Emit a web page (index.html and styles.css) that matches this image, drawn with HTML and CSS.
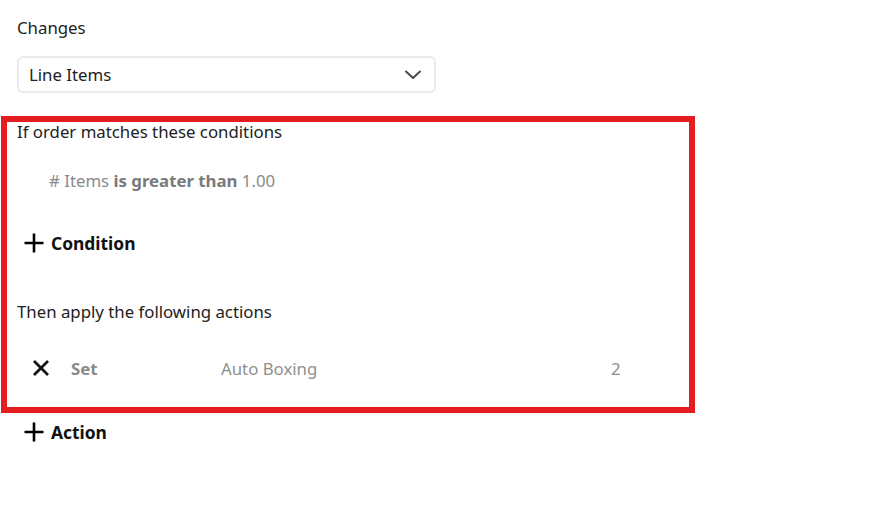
FILE: index.html
```html
<!DOCTYPE html>
<html lang="en">
<head>
    <meta charset="UTF-8">
    <title>Rule</title>
    <link rel="stylesheet" href="styles.css">
</head>
<body>
<div class="panel">
    <div class="field-label">Changes</div>
    <div class="select">
        <span>Line Items</span>
        <svg class="chevron" width="18" height="10" viewBox="0 0 18 10">
            <path d="M2 1.5 L9 8 L16 1.5" fill="none" stroke="#4a4a4a" stroke-width="2" stroke-linecap="round" stroke-linejoin="round"/>
        </svg>
    </div>

    <div class="rule">
        <div class="rule-title">If order matches these conditions</div>
        <div class="condition">
            # Items <b>is greater than</b> 1.00
        </div>
        <div class="add-btn add-condition">
            <svg width="20" height="20" viewBox="0 0 20 20">
                <path d="M10 0.5 V19.5 M0.5 10 H19.5" stroke="#000" stroke-width="2.6"/>
            </svg>
            <span>Condition</span>
        </div>

        <div class="rule-title then">Then apply the following actions</div>
        <div class="action-row">
            <svg class="remove" width="18" height="18" viewBox="0 0 18 18">
                <path d="M2 2 L16 16 M16 2 L2 16" stroke="#111" stroke-width="2.8"/>
            </svg>
            <span class="verb">Set</span>
            <span class="target">Auto Boxing</span>
            <span class="value">2</span>
        </div>
    </div>

    <div class="add-btn add-action">
        <svg width="20" height="20" viewBox="0 0 20 20">
            <path d="M10 0.5 V19.5 M0.5 10 H19.5" stroke="#000" stroke-width="2.6"/>
        </svg>
        <span>Action</span>
    </div>
</div>
</body>
</html>
```

FILE: styles.css
```css
*{
    margin: 0;
    padding: 0;
    box-sizing: border-box;
}
body{
    background: #fff;
    font-family: "Noto Sans", "Open Sans", sans-serif;
    font-size: 16.8px;
    color: #222;
}
.panel{
    padding: 17px 0 0 17px;
}
.field-label{
    line-height: 22px;
}
.select{
    display: flex;
    align-items: center;
    justify-content: space-between;
    width: 419px;
    height: 37px;
    margin-top: 17px;
    padding: 0 12px 0 10px;
    border: 2px solid #e8ecf0;
    border-radius: 6px;
}
.select span{
    line-height: 20px;
}

/* red frame round the rule */
.rule{
    width: 694px;
    margin: 23px 0 0 -16px;
    padding: 0 10px 27px;
    border: 6px solid #e41d21;
}
.rule-title{
    line-height: 20px;
}
.rule-title.then{
    margin-top: 47px;
}
.condition{
    margin: 28px 0 0 32px;
    line-height: 22px;
    color: #8a8a8a;
}
.condition b{
    color: #7a7a7a;
}
.add-btn{
    display: flex;
    align-items: center;
    gap: 7px;
    height: 24px;
    padding-left: 7px;
    font-size: 17.4px;
    font-weight: bold;
    color: #111;
}
.add-condition{
    margin-top: 39px;
}
.add-action{
    margin-top: 7px;
}
.action-row{
    display: grid;
    grid-template-columns: 54px 150px 390px auto;
    align-items: center;
    height: 24px;
    margin-top: 34px;
    color: #8f8f8f;
}
.action-row .remove{
    margin-left: 15px;
}
.action-row .verb{
    font-weight: bold;
    color: #8a8a8a;
}
```
